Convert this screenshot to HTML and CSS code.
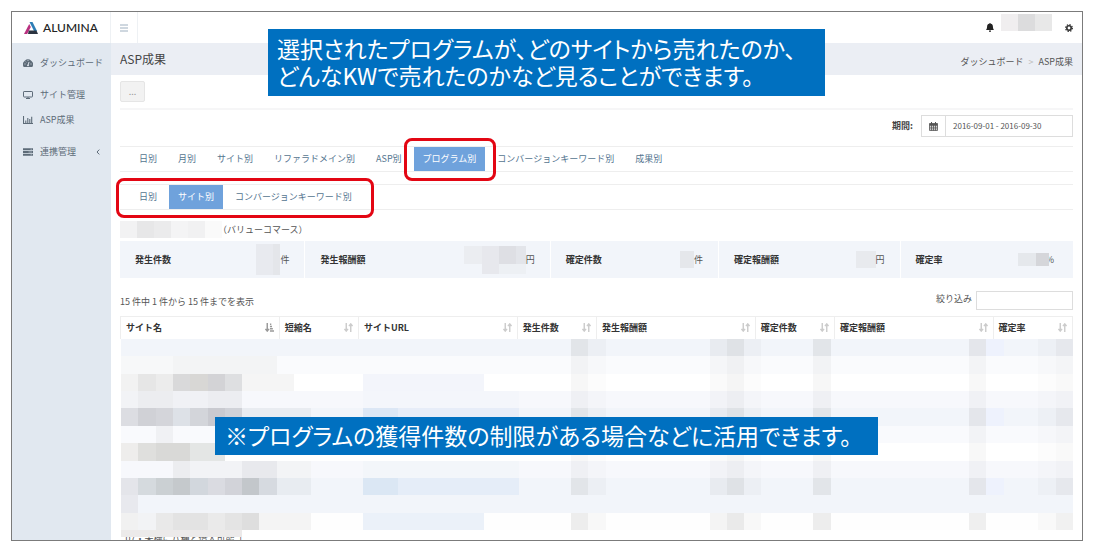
FILE: index.html
```html
<!DOCTYPE html>
<html lang="ja">
<head>
<meta charset="utf-8">
<meta name="viewport" content="width=device-width, initial-scale=1">
<title>ASP成果</title>
<link rel="stylesheet" href="styles.css">
</head>
<body>
<svg class="symbols" width="0" height="0" aria-hidden="true">
  <symbol id="sort" viewBox="0 0 10 10"><path d="M2.5 0v8M0.5 6.5l2 2.5 2-2.5M7.5 10V2M5.5 3.5l2-2.5 2 2.5" fill="none" stroke="currentColor" stroke-width="1.6"/></symbol>
  <symbol id="sort-asc" viewBox="0 0 10 10"><path d="M2.5 0v8M0.5 6.5l2 2.5 2-2.5" fill="none" stroke="currentColor" stroke-width="1.6"/><path d="M5.500.500h1.500v1.800H5.500zM5.500 3h2.300v1.800H5.500zM5.500 5.500h3.200v1.800H5.500zM5.500 8h4.500v1.800H5.500z" fill="currentColor"/></symbol>
</svg>
<div class="frame">
  <header class="topbar">
    <a class="brand" href="#">
      <svg width="14" height="12" viewBox="0 0 14 12" aria-hidden="true"><path d="M5.200 2 6.800 5 3.200 12H0z" fill="#b8307f"/><path d="M5.500 0h3L13 9h-3z" fill="#2d7db5"/><path d="M4.800 8.500h7.700L14 12H4z" fill="#2b3440"/></svg>
      <span>ALUMINA</span>
    </a>
    <button class="toggle" type="button" aria-label="メニュー"><svg width="8" height="8" viewBox="0 0 8 8"><path d="M0 1h8M0 4h8M0 7h8" stroke="#9fb0c0"/></svg></button>
    <div class="tools">
      <svg width="8" height="9" viewBox="0 0 8 9" aria-hidden="true"><path d="M4 0c.5 0 .7.300.7.700C6.500 1 6.800 2 6.900 3.500 7 5 7.200 6 8 7H0c.8-1 1-2 1.100-3.500C1.200 2 1.500 1 3.300.7 3.300.3 3.500 0 4 0zM3 7.500h2C5 8.500 4.500 9 4 9S3 8.500 3 7.500z" fill="#222"/></svg>
      <span class="user"><i></i><i></i><i></i></span>
      <svg width="8" height="8" viewBox="0 0 8 8" aria-hidden="true"><circle cx="4" cy="4" r="2.200" fill="none" stroke="#333" stroke-width="1.600"/><circle cx="4" cy="4" r="3.400" fill="none" stroke="#333" stroke-width="1.200" stroke-dasharray="1.350 1.320"/></svg>
    </div>
  </header>
  <div class="body">
    <nav class="sidebar">
      <a href="#"><svg width="10" height="8" viewBox="0 0 10 8"><path d="M.7 8A5 5 0 1 1 9.300 8z" fill="#5d6b78"/><path d="M5 6.500 6 3M1.500 5h1M7.500 5h1M2.700 2.500l.6.6M5 1.200v.8" stroke="#e1e8f0" stroke-width=".9"/><circle cx="5" cy="6.300" r=".9" fill="#e1e8f0"/></svg><span>ダッシュボード</span></a>
      <a class="gap" href="#"><svg width="10" height="8" viewBox="0 0 10 8"><rect x=".5" y=".5" width="9" height="5.500" rx=".6" fill="none" stroke="#5d6b78"/><path d="M3 7.500h4M5 6v1.500" stroke="#5d6b78"/></svg><span>サイト管理</span></a>
      <a href="#"><svg width="10" height="8" viewBox="0 0 10 8"><path d="M.5 0v7.500H10M2.800 4.500V7M4.800 2V7M6.800 3V7M8.700 .8V7" fill="none" stroke="#5d6b78" stroke-width="1.100"/></svg><span>ASP成果</span></a>
      <a class="gap" href="#"><svg width="10" height="8" viewBox="0 0 10 8"><path d="M0 1.200h10M0 4h10M0 6.800h10" stroke="#5d6b78" stroke-width="2"/><path d="M7.500 1.200h1.500M5.500 4H9M7.500 6.800h1.500" stroke="#b9c4cf" stroke-width=".7"/></svg><span>連携管理</span><svg class="chev" width="4" height="6" viewBox="0 0 4 6"><path d="M3.300.6 1 3l2.300 2.400" fill="none" stroke="#5d6b78"/></svg></a>
    </nav>
    <main class="main">
      <div class="titlebar">
        <h1>ASP成果</h1>
        <div class="crumbs"><a href="#">ダッシュボード</a><span class="sep">&gt;</span><span>ASP成果</span></div>
      </div>
      <div class="content">
        <div class="actions"><button class="more" type="button">...</button></div>
        <div class="period">
          <label for="range">期間:</label>
          <div class="dates">
            <span class="cal"><svg width="9" height="9" viewBox="0 0 9 9" aria-hidden="true"><path d="M.5 1.500h8v7h-8zM.5 3.500h8M.5 5.200h8M.5 6.900h8M2.500 3v5.500M4.500 3v5.500M6.500 3v5.500" fill="none" stroke="#555" stroke-width=".8"/><path d="M.5 1.500h8v1.500h-8zM2 0h1v2H2zM6 0h1v2H6z" fill="#555"/></svg></span>
            <input id="range" type="text" value="2016-09-01 - 2016-09-30">
          </div>
        </div>
        <nav class="tabs">
          <a href="#">日別</a><a href="#">月別</a><a href="#">サイト別</a><a href="#">リファラドメイン別</a><a href="#">ASP別</a><a class="active" href="#">プログラム別</a><a href="#">コンバージョンキーワード別</a><a href="#">成果別</a>
        </nav>
        <nav class="tabs sub">
          <a href="#">日別</a><a class="active" href="#">サイト別</a><a href="#">コンバージョンキーワード別</a>
        </nav>
        <div class="program"><span class="masked"><i></i><i></i><i></i><i></i><i></i><i></i></span><span>（バリューコマース）</span></div>
        <div class="summary">
          <div><b>発生件数</b><span class="val"><svg width="24" height="31"><path d="M0 0h24v31H0z" fill="#e8eaef"/><path d="M17 0h7v31h-7z" fill="#e4e6ea"/></svg>件</span></div>
          <div><b>発生報酬額</b><span class="val"><svg width="62" height="28"><path d="M0 0h18v18H0z" fill="#ebedf1"/><path d="M18 0h17v28H18z" fill="#e7e8ed"/><path d="M35 0h17v18H35z" fill="#dedfe4"/><path d="M52 0h10v18H52z" fill="#e3e5ea"/><path d="M35 18h27v10H35z" fill="#edf0f4"/></svg>円</span></div>
          <div><b>確定件数</b><span class="val"><svg width="14" height="17"><path d="M0 0h14v17H0z" fill="#e5e7eb"/></svg>件</span></div>
          <div><b>確定報酬額</b><span class="val"><svg width="20" height="17"><path d="M0 0h20v17H0z" fill="#e8eaee"/></svg>円</span></div>
          <div><b>確定率</b><span class="val percent"><svg width="31" height="13"><path d="M0 0h18v13H0z" fill="#e5e8ec"/><path d="M18 0h13v13H18z" fill="#d5d6da"/></svg>%</span></div>
        </div>
        <div class="listbar">
          <span>15 件中 1 件から 15 件までを表示</span>
          <label>絞り込み <input type="text"></label>
        </div>
        <table class="grid">
          <colgroup><col class="wide"><col><col class="wide"><col><col class="wide"><col><col class="wide"><col></colgroup>
          <thead><tr>
            <th><div>サイト名<svg class="on"><use href="#sort-asc"/></svg></div></th>
            <th><div>短縮名<svg><use href="#sort"/></svg></div></th>
            <th><div>サイトURL<svg><use href="#sort"/></svg></div></th>
            <th><div>発生件数<svg><use href="#sort"/></svg></div></th>
            <th><div>発生報酬額<svg><use href="#sort"/></svg></div></th>
            <th><div>確定件数<svg><use href="#sort"/></svg></div></th>
            <th><div>確定報酬額<svg><use href="#sort"/></svg></div></th>
            <th><div>確定率<svg><use href="#sort"/></svg></div></th>
          </tr></thead>
          <tbody>
            <tr><td class="mask" colspan="8"><svg id="mosaic" viewBox="0 0 55 11" preserveAspectRatio="none" shape-rendering="crispEdges" aria-hidden="true"></svg></td></tr>
            <tr class="last"><td colspan="8"><span class="strip"></span><span class="cut">07・未機に八種と借入可能「</span></td></tr>
          </tbody>
        </table>
      </div>
    </main>
  </div>
  <div class="ring ring-main"></div>
  <div class="ring ring-sub"></div>
  <p class="note note-top">選択されたプログラムが、どのサイトから売れたのか、<br>どんなKWで売れたのかなど見ることができます。</p>
  <p class="note note-bottom">※プログラムの獲得件数の制限がある場合などに活用できます。</p>
</div>
<script src="mosaic.js"></script>
</body>
</html>
```
FILE: styles.css
```css
* { box-sizing: border-box; }
body {
  margin: 0;
  padding: 11px 10px 0 11px;
  background: #fff;
  color: #555;
  font: 9px/14px "Noto Sans CJK JP", sans-serif;
}
a { color: inherit; text-decoration: none; }
button, input { font: inherit; color: inherit; }
svg { display: block; flex: none; }
.symbols { position: absolute; }
.frame {
  position: relative;
  display: flex;
  flex-direction: column;
  height: calc(100vh - 30px);
  border: 1px solid #7b7b7b;
  overflow: hidden;
}
.topbar { display: flex; flex: none; height: 31px; }
.brand {
  display: flex;
  align-items: center;
  gap: 5px;
  width: 99px;
  padding-left: 12px;
  border-right: 1px solid #eef1f4;
  color: #222;
  font: 500 12px/14px Lato, sans-serif;
}
.toggle {
  display: grid;
  place-items: center;
  width: 27px;
  padding: 0;
  border: 0;
  border-right: 1px solid #eef1f4;
  background: none;
}
.tools { display: flex; align-items: center; margin-left: auto; padding-right: 9px; }
.user { display: flex; align-self: flex-start; margin: 2px 13px 0 7px; }
.user i { width: 17px; height: 17px; background: #f0eeef; }
.user i:nth-child(2) { background: #dcdcdd; }
.user i:nth-child(3) { background: #e8e8e8; }

.body { display: flex; flex: 1; min-height: 0; }
.sidebar { flex: none; width: 99px; padding: 7px 11px; background: #e1e8f0; color: #5d6b78; }
.sidebar a { display: flex; align-items: center; gap: 7px; height: 25px; white-space: nowrap; }
.sidebar .gap { margin-top: 7px; }
.sidebar .chev { margin-left: auto; }
.main { flex: 1; min-width: 0; }
.titlebar {
  display: flex;
  justify-content: space-between;
  height: 32px;
  padding: 6px 9px;
  background: #ebeef4;
}
h1 { margin: 0; color: #444; font-size: 12px; line-height: 20px; font-weight: 400; }
.crumbs { display: flex; gap: 5px; padding-top: 6px; }
.crumbs .sep { color: #bbb; }

.content { padding: 0 9px; }
.actions { padding: 6px 0; border-bottom: 2px solid #f6f6f7; }
.more {
  display: block;
  width: 25px;
  height: 21px;
  padding: 0;
  border: 1px solid #e5e5e5;
  border-radius: 2px;
  background: #f2f2f2;
  color: #999;
  line-height: 14px;
}
.period { display: flex; justify-content: flex-end; align-items: center; gap: 8px; padding: 5px 0 9px; }
.period label { color: #444; font-weight: 700; }
.dates { display: flex; width: 152px; height: 22px; border: 1px solid #ddd; }
.cal { display: grid; place-items: center; width: 24px; border-right: 1px solid #ddd; }
.dates input { flex: 1; min-width: 0; padding: 0 7px; border: 0; font-size: 8px; outline: 0; }
.tabs {
  display: flex;
  gap: 3px;
  height: 26px;
  padding-left: 10px;
  border-top: 1px solid #eee;
  border-bottom: 1px solid #eee;
  color: #54758f;
  white-space: nowrap;
}
.tabs a { padding: 5px 9px; }
.tabs .active { background: #6fa2dc; color: #fff; }
.tabs.sub { margin-top: 12px; }
.program { display: flex; align-items: center; height: 17px; margin: 11px 0 3px; }
.masked { display: flex; margin-right: -4px; }
.masked i { width: 17px; height: 17px; background: #f2f2f3; }
.masked i:nth-child(2) { background: #e7e7e8; }
.masked i:nth-child(3) { background: #ebebec; }
.masked i:nth-child(4) { background: #f4f4f5; }
.masked i:nth-child(n+5) { background: #f1f1f2; }
.masked i:last-child { background: #fafafa; }
.summary {
  display: grid;
  grid-template-columns: 185fr 245fr 168fr 181fr 173fr;
  gap: 1px;
}
.summary > div {
  display: flex;
  align-items: center;
  justify-content: space-between;
  height: 37px;
  padding: 0 15px;
  background: #f2f5fa;
}
.summary b, .grid th { color: #333; font-weight: 700; }
.val { display: flex; align-items: center; }
.percent { padding-right: 4px; }
.percent svg { margin-right: -3px; z-index: 1; }
.listbar { display: flex; justify-content: space-between; height: 38px; padding-top: 13px; }
.listbar > span { padding-top: 4px; }
.listbar label { display: flex; align-items: flex-start; gap: 4px; line-height: 16px; }
.listbar input { width: 97px; height: 19px; border: 1px solid #ddd; }

.grid { width: 100%; border-collapse: collapse; table-layout: fixed; }
.grid col { width: 8.333%; }
.grid .wide { width: 16.667%; }
.grid th { height: 22px; padding: 0 5px; border: 1px solid #eee; border-bottom: 0; text-align: left; white-space: nowrap; }
.grid th div { display: flex; align-items: center; justify-content: space-between; }
.grid th svg { width: 9px; height: 9px; color: #ccc; }
.grid th svg.on { color: #999; }
.grid td { padding: 0; }
#mosaic { width: 100%; height: 191px; }
.last td { position: relative; height: 14px; }
.strip { display: block; width: 121px; height: 7px; background: #eceaea; }
.cut { display: block; height: 7px; padding-left: 5px; overflow: hidden; line-height: 4px; }

.ring { position: absolute; border: 3px solid #e30613; border-radius: 8px; }
.ring-main { left: 392px; top: 126px; width: 92px; height: 43px; }
.ring-sub { left: 104px; top: 166px; width: 258px; height: 40px; }
.note {
  position: absolute;
  margin: 0;
  background: #0070c0;
  color: #fff;
  font-size: 23px;
  line-height: 27px;
  font-feature-settings: "palt";
  white-space: nowrap;
}
.note-top { left: 256px; top: 17px; width: 557px; padding: 6px 9px 7px; }
.note-bottom { left: 203px; top: 405px; width: 663px; padding: 5px 10px 6px; }
```
FILE: mosaic.js
```js
// Blocks that hide the table's private values: [column, row, columns, rows, colour]
const blocks = [
  [0, 0, 55, 1, '#f2f5fa'], [0, 1, 55, 1, '#fafbfd'], [0, 2, 55, 1, '#ffffff'], [0, 3, 55, 1, '#f7f8fc'],
  [0, 4, 55, 1, '#f2f5fa'], [0, 5, 55, 1, '#f9fafd'], [0, 6, 55, 1, '#ffffff'], [0, 7, 55, 1, '#f7f8fc'],
  [0, 8, 55, 2, '#f2f5fa'], [0, 10, 55, 1, '#fefefe'],
  [0, 1, 3, 1, '#f7f8f9'], [3, 1, 6, 1, '#f3f4f5'],
  [0, 2, 1, 1, '#f2f2f2'], [1, 2, 1, 1, '#e6e6e6'], [2, 2, 1, 1, '#ececec'], [3, 2, 1, 1, '#d9d9da'],
  [4, 2, 1, 1, '#d8d7d5'], [5, 2, 1, 1, '#d3d3d6'], [6, 2, 1, 1, '#dedfe1'], [7, 2, 3, 1, '#f5f5f5'],
  [0, 3, 1, 1, '#f2f3f6'], [1, 3, 2, 1, '#ecedf0'], [3, 3, 2, 1, '#f0f1f5'], [5, 3, 2, 1, '#ecedf1'],
  [0, 4, 1, 1, '#dcdde2'], [1, 4, 1, 1, '#d0d1d6'], [2, 4, 1, 1, '#d4d5da'], [3, 4, 1, 1, '#dde1e7'],
  [4, 4, 1, 1, '#d3d5da'], [5, 4, 1, 1, '#c9cad0'], [6, 4, 1, 1, '#d0d2d8'], [7, 4, 4, 1, '#e9ecf1'],
  [2, 5, 1, 1, '#f0f1f4'], [0, 6, 1, 1, '#eeedec'], [1, 6, 1, 1, '#dfdfdd'], [2, 6, 2, 1, '#d9d9d7'], [4, 6, 2, 1, '#e4e6e5'],
  [3, 7, 1, 1, '#ecedf0'], [4, 7, 3, 1, '#f2f3f6'], [7, 7, 2, 1, '#e8e9ed'], [9, 7, 2, 1, '#f3f4f6'],
  [0, 8, 1, 1, '#e4e5ea'], [1, 8, 1, 1, '#d5dade'], [2, 8, 1, 1, '#cbd0d3'], [3, 8, 1, 1, '#c5c9cc'],
  [4, 8, 1, 1, '#d2d7dd'], [5, 8, 1, 1, '#dadbe1'], [6, 8, 1, 1, '#d2d3d9'], [7, 8, 1, 1, '#c3c7cb'],
  [8, 8, 1, 1, '#d6dae0'], [9, 8, 2, 1, '#e8ecf1'], [0, 9, 1, 1, '#e8e9ee'],
  [0, 10, 1, 1, '#f1f1f1'], [1, 10, 1, 1, '#f2f3f5'], [2, 10, 1, 1, '#e9e9e9'], [3, 10, 2, 1, '#e3e3e3'],
  [5, 10, 1, 1, '#eaeaea'], [6, 10, 1, 1, '#e4e4e4'], [7, 10, 1, 1, '#dedede'], [8, 10, 3, 1, '#f4f4f4'],
  [14, 2, 7, 1, '#f3f5fb'], [14, 3, 9, 1, '#f4f6fb'], [14, 4, 2, 1, '#dce7f5'], [16, 4, 7, 1, '#e7edf8'],
  [14, 7, 9, 1, '#f3f6fa'], [14, 8, 2, 1, '#dbe7f4'], [16, 8, 7, 1, '#e5edf8'], [14, 10, 7, 1, '#ebf1f9']
];
// Numeric columns carry a darker block on the first, fifth, ninth and last rows
[[26, 1], [27, .4], [34, .6], [35, 1.2], [36, .4], [40, 1], [49, .9], [53, .3], [54, .8]].forEach(([column, weight]) => {
  for (let row = 0; row < 11; row++) {
    if (row === 9) continue;
    const strong = row % 4 === 0 || row === 10;
    blocks.push([column, row, 1, 1, `rgba(90, 90, 90, ${(strong ? .1 : .05) * weight})`]);
  }
});
[0, 4, 8].forEach(row => blocks.push([50, row, 1, 1, '#eef2fd']));

const mosaic = document.getElementById('mosaic');
blocks.forEach(([x, y, width, height, fill]) => {
  const rect = document.createElementNS('http://www.w3.org/2000/svg', 'rect');
  Object.entries({ x, y, width, height, fill }).forEach(([name, value]) => rect.setAttribute(name, value));
  mosaic.append(rect);
});
```
